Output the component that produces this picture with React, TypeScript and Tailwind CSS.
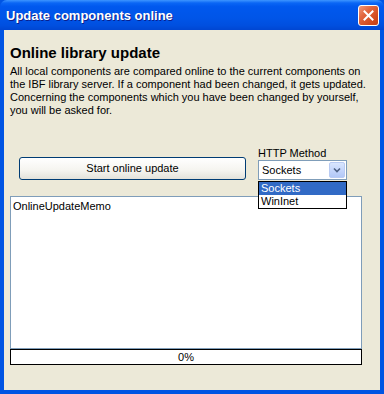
import React from 'react';

function CloseButton() {
  return (
    <div className="flex h-[21px] w-[21px] items-center justify-center rounded-[3px] border border-white bg-[linear-gradient(135deg,#F0997B_0%,#E2673F_35%,#D24A1E_75%,#C23E16_100%)]">
      <svg width="11" height="11" viewBox="0 0 11 11">
        <path d="M1.5 1.5 L9.5 9.5 M9.5 1.5 L1.5 9.5" stroke="white" strokeWidth="2" strokeLinecap="square" />
      </svg>
    </div>
  );
}

export default function App() {
  const font = { fontFamily: '"Liberation Sans", Arial, sans-serif' };

  return (
    <div className="flex h-[394px] w-[384px] flex-col bg-[#0054E3] text-black" style={font}>
      {/* title bar */}
      <div className="flex h-[30px] shrink-0 items-center justify-between rounded-t-[7px] bg-[linear-gradient(to_bottom,#3D95FF_0%,#0A66F5_10%,#0058EE_22%,#0055E8_60%,#004FDF_85%,#0046D2_100%)] pl-[6px] pr-[5px]">
        <span className="text-[13px] font-bold leading-none text-white [text-shadow:1px_1px_0_#0A1E8C]">
          Update components online
        </span>
        <CloseButton />
      </div>

      {/* client area */}
      <div className="flex flex-1 flex-col border-x-4 border-b-4 border-[#0054E3] bg-[#ECE9D8] pl-[6px]">
        <h2 className="mt-[14px] text-[15px] font-bold leading-[18px]">Online library update</h2>
        <p className="mt-[3px] w-[360px] text-[11px] leading-[13px]">
          All local components are compared online to the current components on the IBF library server. If a
          component had been changed, it gets updated. Concerning the components which you have been changed by
          yourself, you will be asked for.
        </p>

        <div className="mt-[30px] flex items-end pl-[9px]">
          <button className="flex h-[23px] w-[227px] items-center justify-center rounded-[3px] border border-[#003C74] bg-[linear-gradient(to_bottom,#FFFFFF_0%,#F5F4EF_60%,#E3E2DA_100%)] text-[11px]">
            Start online update
          </button>
          <div className="ml-[12px] flex flex-col">
            <span className="text-[11px] leading-[13px]">HTTP Method</span>
            <div className="relative">
              <div className="flex h-[20px] w-[89px] items-center justify-between border border-[#7F9DB9] bg-white pl-[3px] pr-[1px]">
                <span className="text-[11px]">Sockets</span>
                <div className="flex h-[16px] w-[16px] items-center justify-center rounded-[2px] border border-[#B9CBF3] bg-[linear-gradient(to_bottom,#D9E6FE_0%,#C1D3FB_60%,#B2C8F7_100%)]">
                  <svg width="8" height="6" viewBox="0 0 8 6">
                    <path d="M1 1.5 L4 4.5 L7 1.5" stroke="#4D6185" strokeWidth="1.6" fill="none" />
                  </svg>
                </div>
              </div>
              <div className="absolute left-0 top-[21px] z-10 w-[89px] border border-black bg-white text-[11px] leading-[13px]">
                <div className="bg-[#316AC5] pl-[2px] text-white">Sockets</div>
                <div className="pl-[2px]">WinInet</div>
              </div>
            </div>
          </div>
        </div>

        <div className="mt-[16px] h-[153px] w-[352px] border border-[#7F9DB9] bg-white px-[2px] pt-[3px] text-[11px] leading-[13px]">
          OnlineUpdateMemo
        </div>
        <div className="flex h-[16px] w-[352px] items-center justify-center border border-black bg-white text-[11px] leading-none">
          0%
        </div>
      </div>
    </div>
  );
}
